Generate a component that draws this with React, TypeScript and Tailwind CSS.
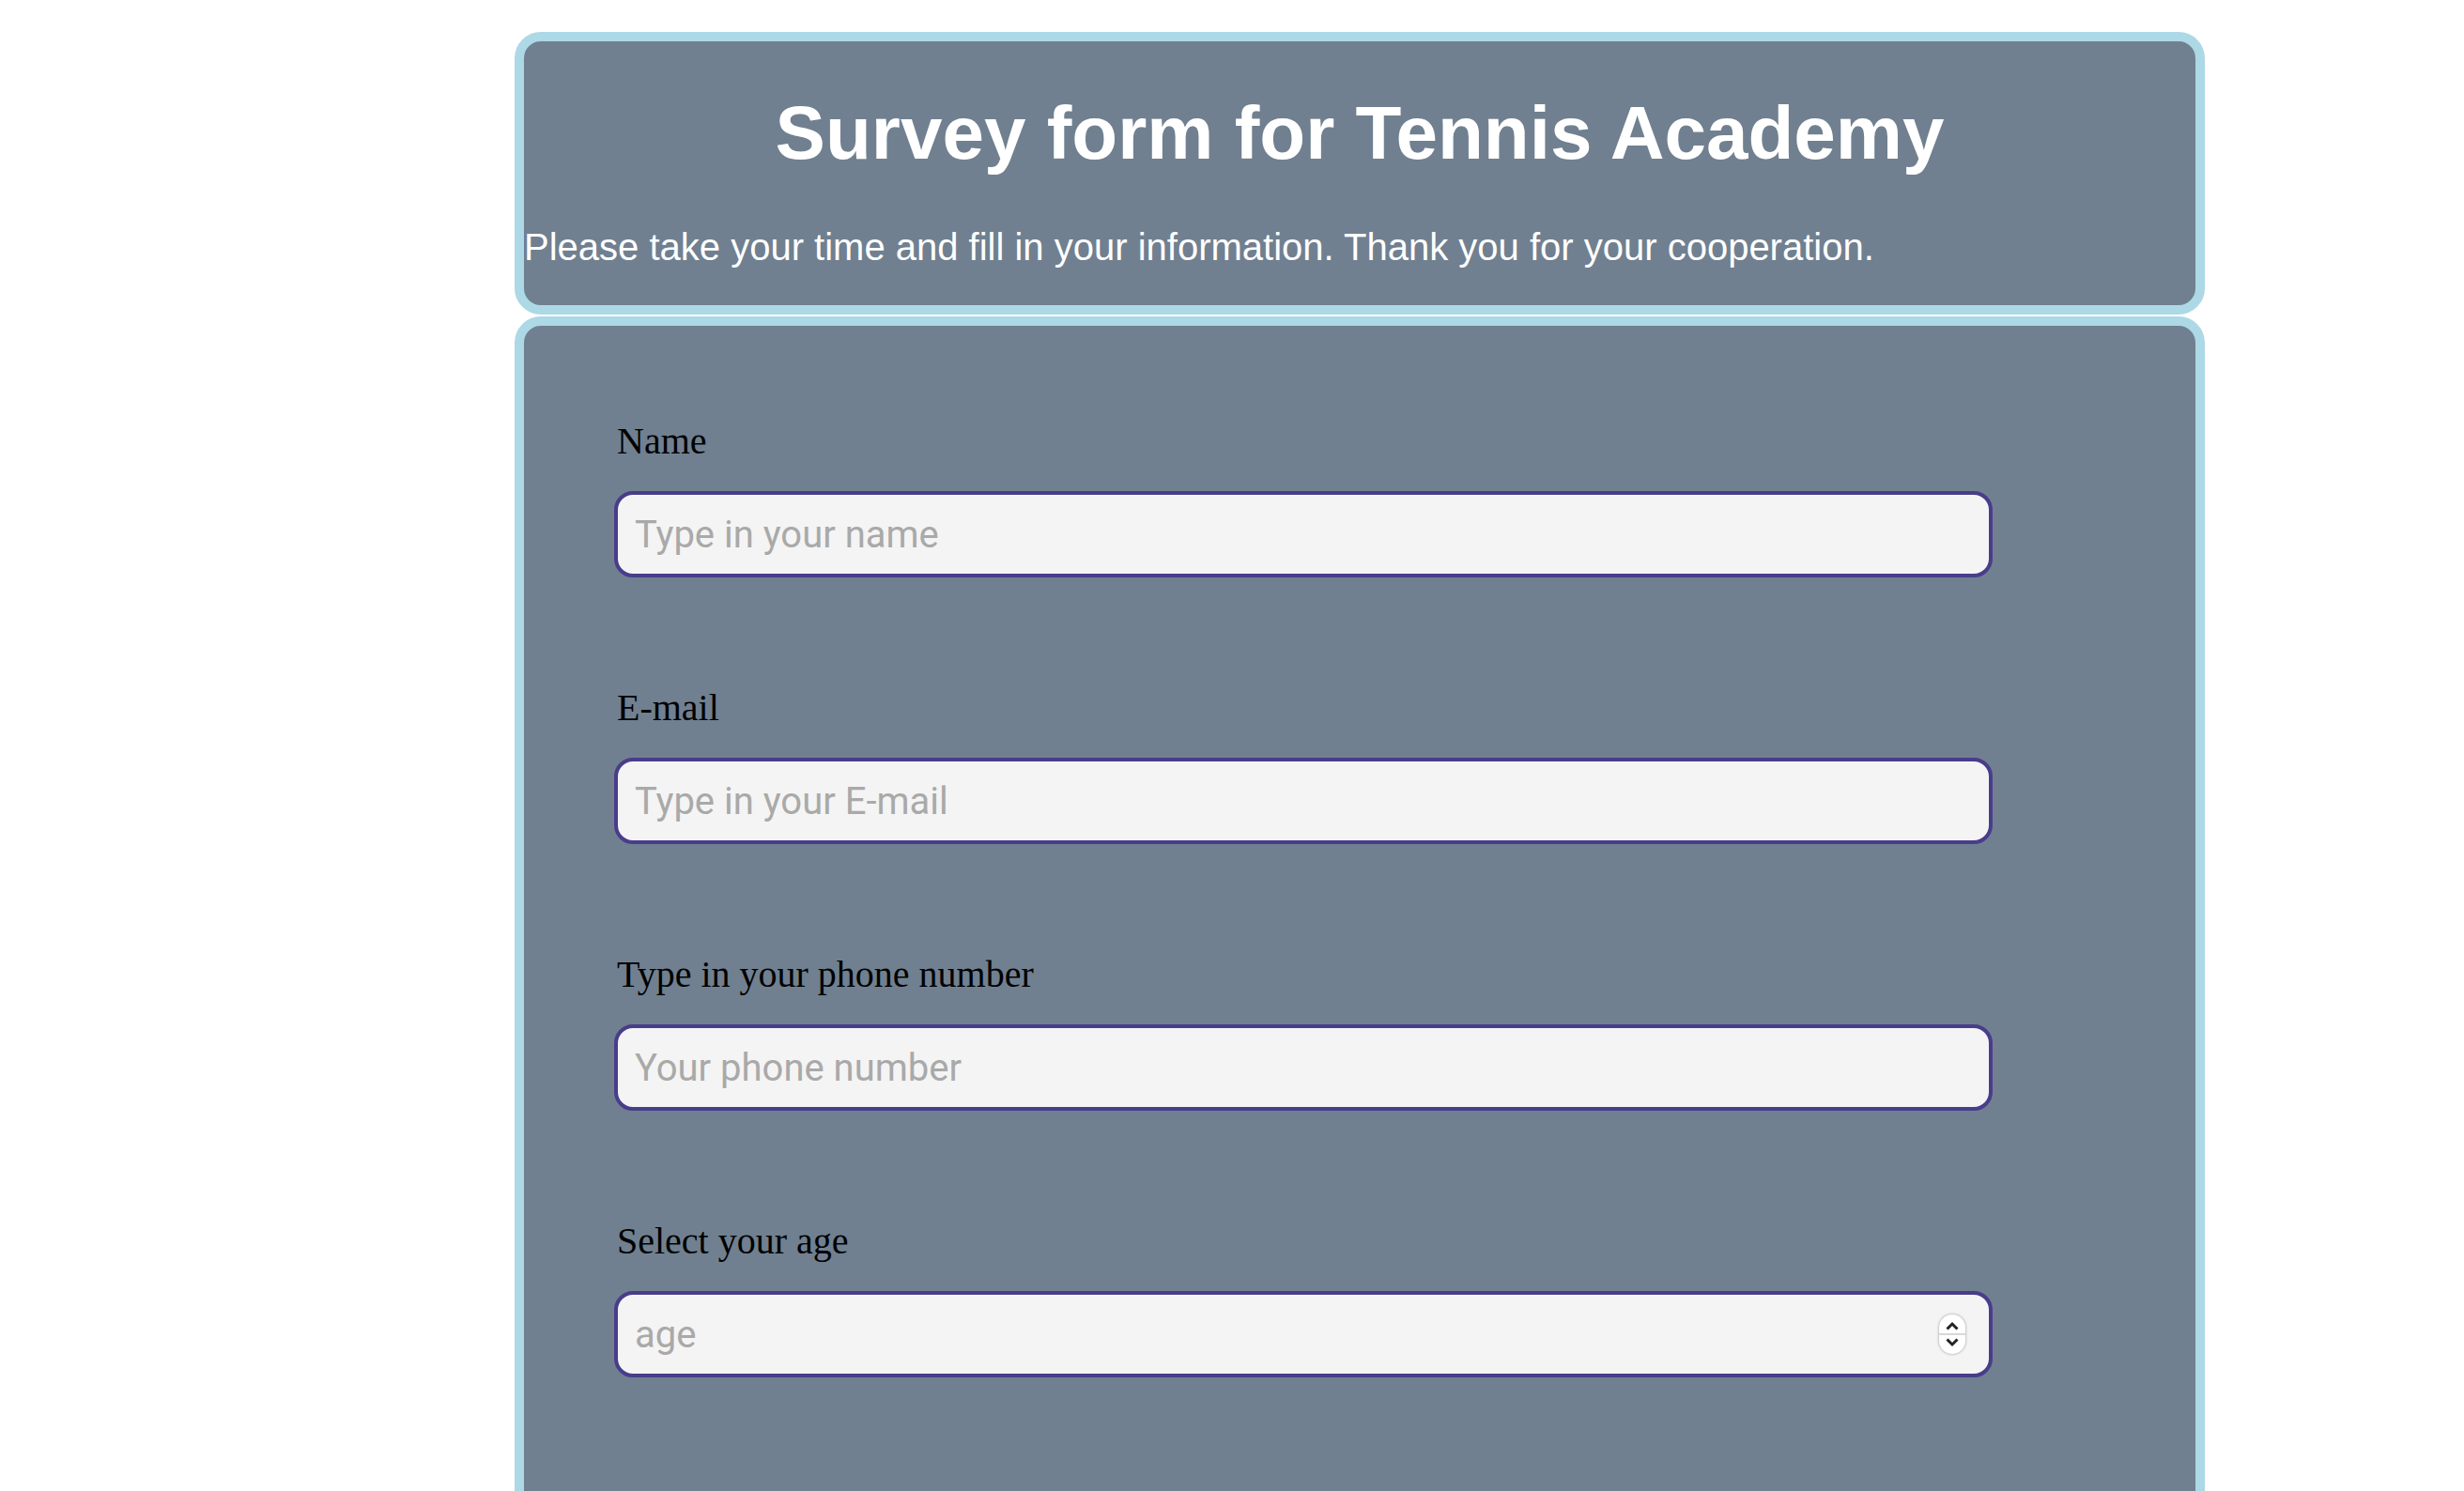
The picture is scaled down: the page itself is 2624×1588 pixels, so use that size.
import { useState } from "react";

const fields = [
  { id: "name", label: "Name", type: "text", placeholder: "Type in your name" },
  { id: "email", label: "E-mail", type: "email", placeholder: "Type in your E-mail" },
  { id: "phone", label: "Type in your phone number", type: "tel", placeholder: "Your phone number" },
];

function Spinner() {
  return (
    <div className="absolute right-[29px] top-1/2 -translate-y-1/2 w-[28px] h-[42px] rounded-full bg-white shadow-[0_0_3px_rgba(0,0,0,0.4)] flex flex-col items-center justify-center">
      <svg width="16" height="12" viewBox="0 0 16 12" className="mb-[2px]">
        <path d="M2.5 9.5 L8 4 L13.5 9.5" stroke="#222" strokeWidth="3" fill="none" />
      </svg>
      <div className="w-full h-[2px] bg-[#d8d8d8]" />
      <svg width="16" height="12" viewBox="0 0 16 12" className="mt-[2px]">
        <path d="M2.5 2.5 L8 8 L13.5 2.5" stroke="#222" strokeWidth="3" fill="none" />
      </svg>
    </div>
  );
}

export default function App() {
  const [age, setAge] = useState("");

  return (
    <div className="min-h-screen bg-white pt-[34px] pl-[548px]">
      <div className="w-[1800px]">
        {/* header */}
        <header className="rounded-[28px] border-[10px] border-[#add8e6] bg-[#708090] pt-[52px] pb-[39px] text-white font-['Liberation_Sans',Arial,sans-serif]">
          <h1 className="text-center text-[80px] leading-[92px] font-bold">Survey form for Tennis Academy</h1>
          <p className="mt-[52px] text-[40px] leading-[46px]">
            Please take your time and fill in your information. Thank you for your cooperation.
          </p>
        </header>

        {/* form */}
        <form className="mt-[2px] rounded-[28px] border-[10px] border-[#add8e6] bg-[#708090] pt-[100px] pl-[96px] pb-[400px] flex flex-col gap-[116px]">
          {fields.map((f) => (
            <div key={f.id} className="flex flex-col">
              <label htmlFor={f.id} className="pl-[3px] text-[40px] leading-[46px] text-black font-['Liberation_Serif','Times_New_Roman',serif]">
                {f.label}
              </label>
              <input
                id={f.id}
                type={f.type}
                placeholder={f.placeholder}
                className="mt-[30px] w-[1468px] h-[92px] rounded-[20px] border-4 border-[#483d8b] bg-[#f4f4f4] pl-[18px] text-[40px] font-['Roboto',sans-serif] placeholder:text-[#a9a9a9] outline-none"
              />
            </div>
          ))}

          <div className="flex flex-col">
            <label htmlFor="age" className="pl-[3px] text-[40px] leading-[46px] text-black font-['Liberation_Serif','Times_New_Roman',serif]">
              Select your age
            </label>
            <div className="relative mt-[30px] w-[1468px]">
              <input
                id="age"
                type="number"
                placeholder="age"
                value={age}
                onChange={(e) => setAge(e.target.value)}
                className="w-full h-[92px] rounded-[20px] border-4 border-[#483d8b] bg-[#f4f4f4] pl-[18px] text-[40px] font-['Roboto',sans-serif] placeholder:text-[#a9a9a9] outline-none [appearance:textfield] [&::-webkit-inner-spin-button]:appearance-none"
              />
              <Spinner />
            </div>
          </div>
        </form>
      </div>
    </div>
  );
}
